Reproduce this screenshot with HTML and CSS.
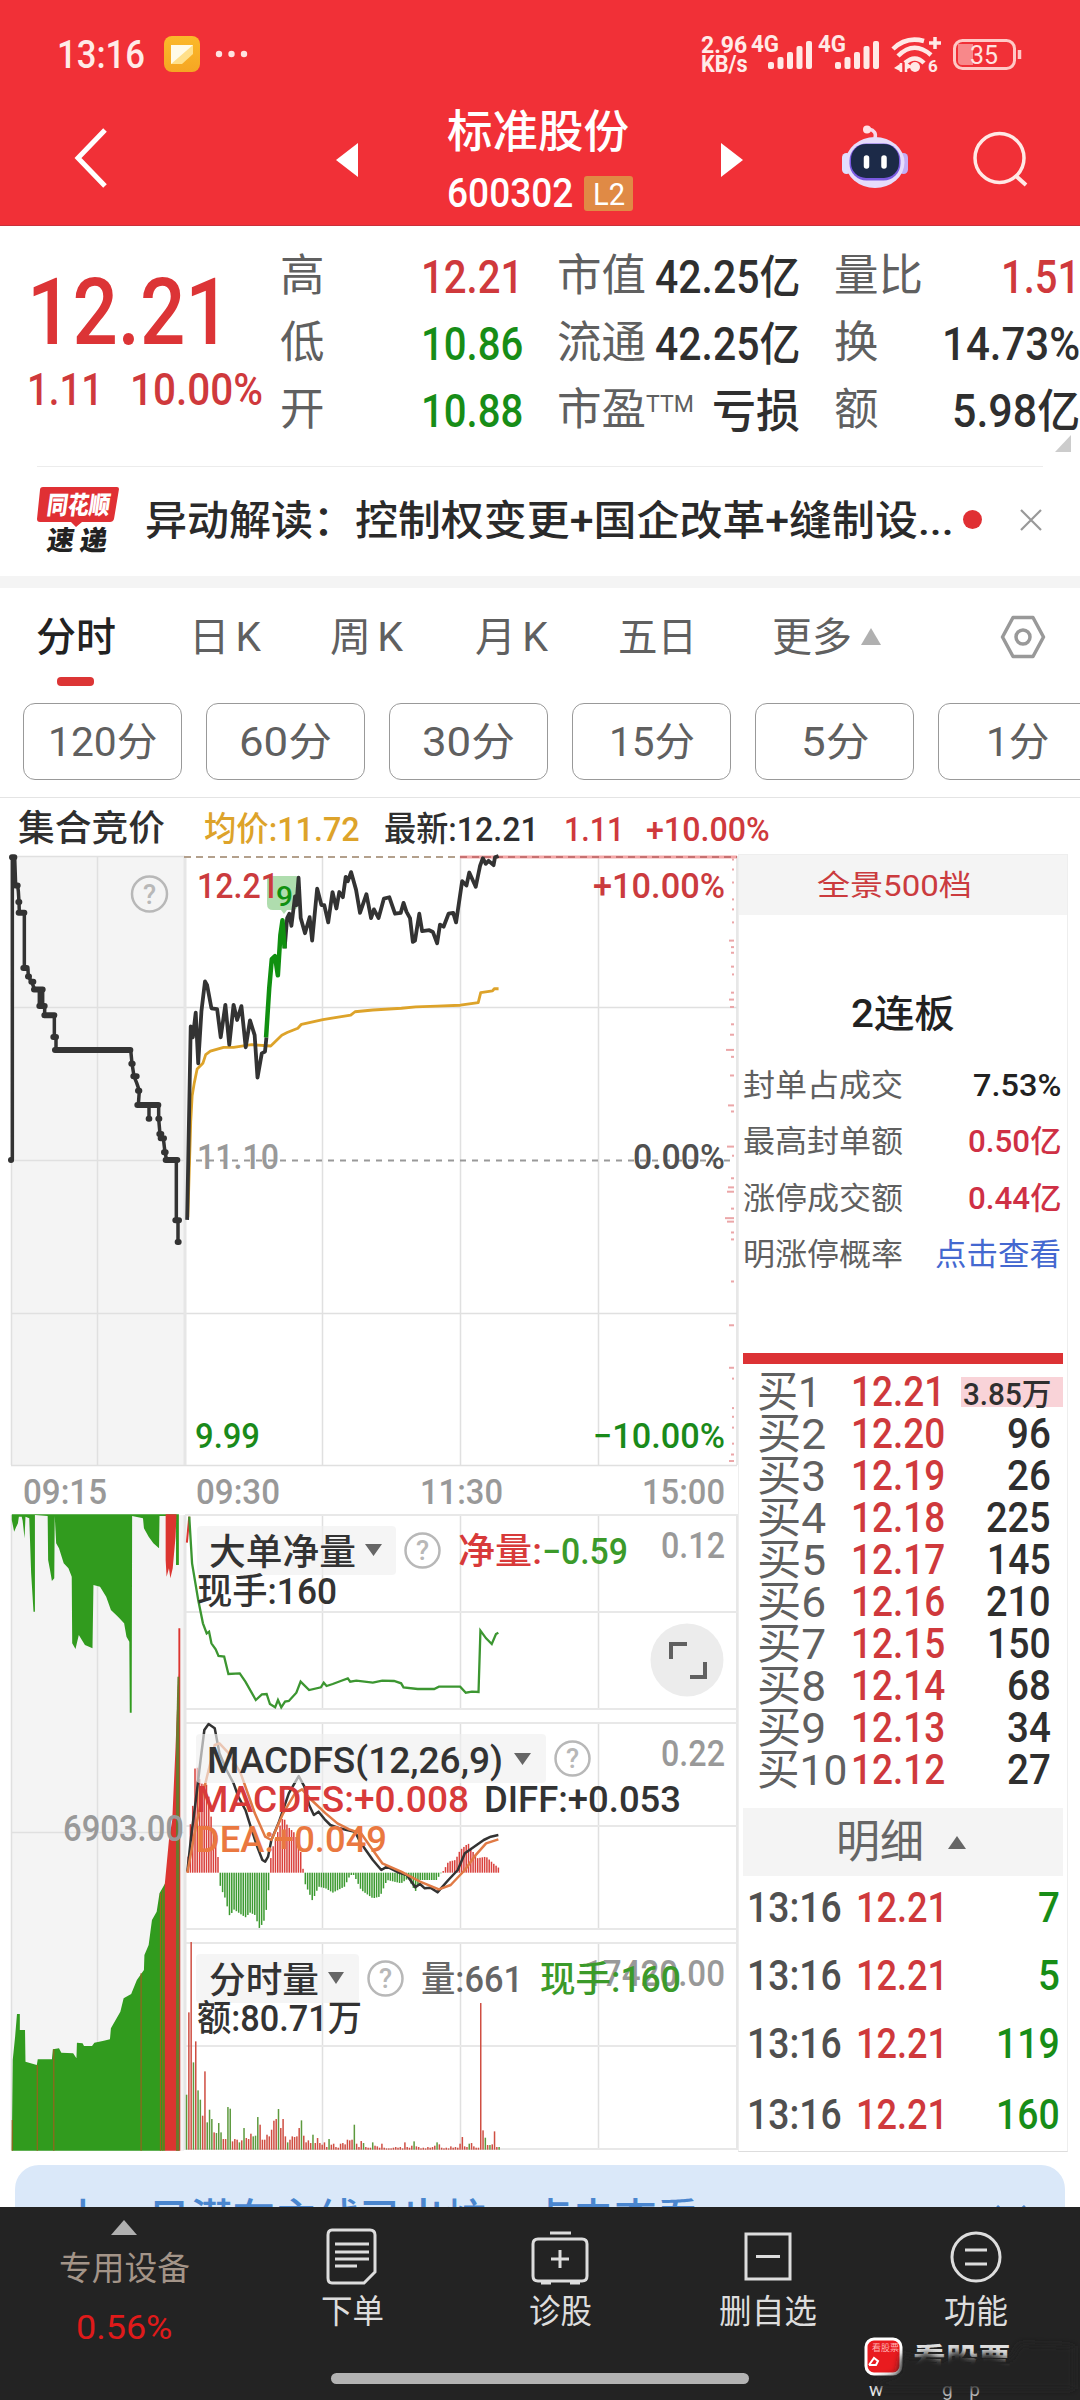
FILE: index.html
```html
<!DOCTYPE html>
<html lang="zh-CN">
<head>
<meta charset="utf-8">
<title>标准股份 600302</title>
<link rel="stylesheet" href="styles.css">
</head>
<body>
<div class="screen">
<header class="top">
  <div class="status">
    <span class="t s39" data-w="88">13:16</span>
    <svg class="note" viewBox="0 0 36 36"><defs><linearGradient id="ng" x1="0" y1="0" x2="0" y2="1"><stop offset="0" stop-color="#fbb92a"/><stop offset="1" stop-color="#f5a623"/></linearGradient></defs><rect width="36" height="36" rx="8" fill="url(#ng)"/><path d="M7 9h22v9L18 28H7z" fill="#ffe08a"/><path d="M7 9h22L7 28z" fill="#fffbe8"/></svg>
    <svg class="dots" viewBox="0 0 34 8"><g fill="#ffe3e0"><circle cx="4" cy="4" r="3.2"/><circle cx="16.500" cy="4" r="3.200"/><circle cx="29" cy="4" r="3.200"/></g></svg>
    <span class="grow"></span>
    <div class="speed"><span class="t" data-w="46">2.96</span><span class="t" data-w="47">KB/s</span></div>
    <svg class="sig" viewBox="0 0 330 44">
      <g fill="#ffe9e6">
        <text x="1" y="20" class="net" textLength="28" lengthAdjust="spacingAndGlyphs">4G</text>
        <text x="68" y="20" class="net" textLength="28" lengthAdjust="spacingAndGlyphs">4G</text>
        <g id="bars"><rect x="18" y="30" width="6" height="7" rx="2"/><rect x="27.500" y="25" width="6" height="12" rx="2"/><rect x="37" y="20" width="6" height="17" rx="2"/><rect x="46.500" y="14" width="6" height="23" rx="2"/><rect x="56" y="9" width="6" height="28" rx="2"/></g>
        <use href="#bars" x="67"/>
        <circle cx="165" cy="35" r="5"/>
        <text x="178" y="40" class="tiny">6</text>
        <path d="M151 40v-9M156 31v9" stroke="#ffe9e6" stroke-width="2.500"/><path d="M144 36l6-4v7zM157 31l6 4-6 2z"/>
        <path d="M185 5v12M179 11h12" stroke="#ffe9e6" stroke-width="3.500" fill="none"/>
      </g>
      <g fill="none" stroke="#ffe9e6" stroke-width="4.500">
        <path d="M143 17Q156 4 174 9M148 24Q164 8 181 23M155 31Q165 22 174 31"/>
        <rect x="204.500" y="8.500" width="60" height="28" rx="8" stroke-width="3" stroke="#ffc9c6"/>
        <path d="M269.500 18v9" stroke-width="3.500" stroke="#ffc9c6"/>
      </g>
      <path d="M208 12h15v21h-11q-4 0-4-4z" fill="#f8888a"/>
      <text x="220" y="32" class="bat" textLength="28" lengthAdjust="spacingAndGlyphs" fill="#ffe3e0">35</text>
    </svg>
  </div>
  <div class="titlebar">
    <svg class="back" viewBox="0 0 40 64"><path d="M36 4L9 32l27 28" fill="none" stroke="#fff" stroke-width="5"/></svg>
    <svg class="prev" viewBox="0 0 22 34"><path d="M22 0v34L0 17z" fill="#fff"/></svg>
    <div class="name">
      <span class="t s45" data-w="182">标准股份</span>
      <div class="code"><span class="t s40" data-w="126">600302</span><span class="l2"><span class="t" data-w="32">L2</span></span></div>
    </div>
    <svg class="next" viewBox="0 0 22 34"><path d="M0 0v34l22-17z" fill="#fff"/></svg>
    <svg class="robot" viewBox="0 0 66 64">
      <path d="M33 13Q35 6 27 4" fill="none" stroke="#f7d7ea" stroke-width="3.500"/><circle cx="25" cy="4.500" r="4" fill="#ffe0e6"/>
      <rect x="0" y="28" width="9" height="21" rx="4.500" fill="#dfe0ff"/><rect x="57" y="28" width="9" height="21" rx="4.500" fill="#c3aef5"/>
      <ellipse cx="33" cy="37.500" rx="29.500" ry="25.500" fill="#e6dcfb"/>
      <rect x="7.500" y="18.500" width="51" height="37" rx="17" fill="#7a5ae0"/><rect x="9" y="19" width="48" height="34" rx="15" fill="#1c2a48"/>
      <path d="M24.500 33v8M42 33v8" stroke="#fff" stroke-width="5.500" stroke-linecap="round"/>
    </svg>
    <svg class="search" viewBox="0 0 56 56"><circle cx="27.500" cy="27" r="24.500" fill="none" stroke="#ffe9e6" stroke-width="3.500"/><path d="M44 45l10 9" stroke="#ffe9e6" stroke-width="4"/></svg>
  </div>
</header>

<section class="quote">
  <div class="price">
    <span class="t big" data-w="204">12.21</span>
    <div class="chg"><span class="t s45" data-w="76">1.11</span><span class="t s45" data-w="133">10.00%</span></div>
  </div>
  <div class="facts">
    <span class="lab">高</span><span class="t v red" data-w="102">12.21</span>
    <span class="lab">市值</span><span class="t v" data-w="145">42.25亿</span>
    <span class="lab">量比</span><span class="t v red" data-w="79">1.51</span>
    <span class="lab">低</span><span class="t v green" data-w="102">10.86</span>
    <span class="lab">流通</span><span class="t v" data-w="145">42.25亿</span>
    <span class="lab">换</span><span class="t v" data-w="138">14.73%</span>
    <span class="lab">开</span><span class="t v green" data-w="102">10.88</span>
    <span class="lab">市盈<sup class="t" data-w="48">TTM</sup></span><span class="t v" data-w="88">亏损</span>
    <span class="lab">额</span><span class="t v" data-w="128">5.98亿</span>
  </div>
  <i class="corner"></i>
</section>

<section class="news">
  <svg class="logo" viewBox="0 0 82 68">
    <path d="M6 1h74q2 0 2 2l-5 30q-1 3-4 3H45l-6 5-5-5H3q-3 0-3-3L3 4q0-3 3-3z" fill="#e03034"/>
    <g transform="skewX(-8)" font-weight="900"><text x="13" y="28" font-size="25" fill="#fff" textLength="63" lengthAdjust="spacingAndGlyphs">同花顺</text>
    <text x="18" y="64" font-size="27" fill="#222" textLength="60">速递</text></g>
  </svg>
  <span class="headline"><span class="t" data-w="168">异动解读</span><span class="t" data-w="42">：</span><span class="t" data-w="599">控制权变更+国企改革+缝制设...</span></span>
  <i class="reddot"></i>
  <svg class="close" viewBox="0 0 24 24"><path d="M2 2l20 20M22 2L2 22" stroke="#999" stroke-width="2.200"/></svg>
</section>

<nav class="tabs">
  <span class="t on" data-w="80">分时</span>
  <span class="t k" data-w="78">日K</span>
  <span class="t k" data-w="79">周K</span>
  <span class="t k" data-w="79">月K</span>
  <span class="t" data-w="79">五日</span>
  <span class="more"><span class="t" data-w="80">更多</span><i class="up"></i></span>
  <svg class="gear" viewBox="0 0 46 46"><path d="M13 3.500h20L43.500 23 33 42.500H13L2.500 23z" fill="none" stroke="#999" stroke-width="3.500" stroke-linejoin="round"/><circle cx="23" cy="23" r="7" fill="none" stroke="#999" stroke-width="3.500"/></svg>
</nav>
<div class="periods">
  <span class="p"><span class="t" data-w="109">120分</span></span>
  <span class="p"><span class="t" data-w="93">60分</span></span>
  <span class="p"><span class="t" data-w="93">30分</span></span>
  <span class="p"><span class="t" data-w="86">15分</span></span>
  <span class="p"><span class="t" data-w="68">5分</span></span>
  <span class="p"><span class="t" data-w="63">1分</span></span>
</div>
<div class="legend">
  <span class="t auc" data-w="147">集合竞价</span>
  <span class="t gold" data-w="156">均价:11.72</span>
  <span class="t" data-w="155">最新:12.21</span>
  <span class="t red" data-w="60">1.11</span>
  <span class="t red" data-w="124">+10.00%</span>
</div>

<main class="board">
<svg class="chart" viewBox="0 852 738 1302">
  <rect x="11" y="856" width="173" height="609" fill="#f4f4f4"/>
  <rect x="11" y="1515" width="173" height="636" fill="#f4f4f4"/>
  <g stroke="#e0e0e0" stroke-width="1.500" fill="none">
    <path d="M11.500 856V1465M97.500 856V1465M322.500 856V1465M460.500 856V1465M598.500 856V1465M737 856V1465M11 856.500H185M11 1007.500H737M11 1160.500H184M11 1313.500H737M11 1465.500H737"/>
    <path d="M11.500 1515V2150M97.500 1515V2150M322.500 1515V1709M460.500 1515V1709M598.500 1515V1709M322.500 1723V1929M460.500 1723V1929M598.500 1723V1929M322.500 1943V2150M460.500 1943V2150M598.500 1943V2150M737 1515V2150M11 1832.500H184"/>
    <path stroke="#e8e8e8" stroke-width="2" d="M185 1515H738M185 1612H738M185 1709H738M185 1723H738M185 1826H738M185 1929H738M185 1943H738M185 2046H738M185 2149H738"/>
    <path stroke="#e6e6e6" stroke-width="3" d="M185 856V1465M185 1515V2150"/>
  </g>
  <path d="M184 857H460" stroke="#b3a08c" stroke-width="2" stroke-dasharray="7 5"/>
  <path d="M460 857H737" stroke="#f4a7a7" stroke-width="3"/><path d="M460 857H737" stroke="#b86060" stroke-width="1.500" stroke-dasharray="7 5"/>
  <path d="M196 1160.500H736" stroke="#999" stroke-width="2" stroke-dasharray="6 6"/>
  <g id="depth"></g>

  <g transform="translate(0 840) scale(.33333 .43367)" fill="none" stroke="#333">
    <path vector-effect="non-scaling-stroke" stroke-width="3.500" stroke-linejoin="round" d="M33 738H37V40H44L47 105H53L55 118 57 143 58 168H73V295H81L84 300 85 315 95 327 104 345H128V383H118V345M128 383H134V404H163V454H168V484H392L396 515 402 545 410 560 418 578 415 611H476V643L480 678 490 688 495 720 500 738H529V877H534V927M447 611V643"/>
    <path vector-effect="non-scaling-stroke" stroke-width="6" stroke-linecap="round" d="M33 738h.1M36 40h7M46 105h7M55 143h3M56 168h17M70 295h10M84 315h3M94 327h6M102 345h26M118 383h16M133 404h30M160 454h8M165 484h226M394 516h4M400 545h10M414 578h4M412 611h63M446 643h2M475 643h3M478 678h6M482 688h10M492 720h5M497 738h35M526 877h11M533 927h3"/>
  </g>
  <path d="M267 876h31v28q0 6-6 6h-5l-3 4-3-4h-8q-6 0-6-6z" fill="#9bd49a" opacity=".8"/>
  <g transform="translate(180 840) scale(.35714 .43367)" fill="none" stroke-linejoin="round">
    <path vector-effect="non-scaling-stroke" stroke="#dda32a" stroke-width="2.800" d="M22 870L30 650 34 590 40 560 48 528 64 515 72 495 85 487 122 478 150 478 200 472 254 475 285 450 300 444 330 434 340 425 400 414 430 410 478 404 490 396 540 392 620 388 660 385 720 383 785 381 835 375 842 352 875 348 880 343H892"/>
    <path vector-effect="non-scaling-stroke" stroke="#333" stroke-width="3.800" d="M20 876L30 430 36 455 44 398 51 515 60 395 70 326 76 335 88 388 104 390 114 455 127 380 138 472 150 380 160 415 172 383 184 478 196 416 209 450 217 548 229 492 238 488 242 455M293 250L300 180 306 170 312 198 322 130 326 150 332 87 338 180 350 215 363 178 370 232 384 112 396 150 404 150 415 190 427 120 438 158 446 120 456 132 464 85 470 95 479 74 493 115 504 168 522 125 535 180 543 160 556 180 571 135 586 132 602 170 618 168 626 145 634 165 644 180 652 235 658 232 670 170 678 210 698 208 708 212 720 238 728 195 738 200 752 170 765 168 773 190 790 95 802 105 810 75 828 108 840 60 848 42 856 55 864 48 878 58 882 40 892 37"/>
    <path vector-effect="non-scaling-stroke" stroke="#109010" stroke-width="4.500" d="M241 455L250 340 257 275 266 268 274 312 281 220 287 185 293 250"/>
  </g>

  <g class="ct">
    <text x="197" y="898" fill="#cb3b3e" textLength="82" lengthAdjust="spacingAndGlyphs">12.21</text>
    <text x="276" y="906" fill="#109010" font-size="28" textLength="17" lengthAdjust="spacingAndGlyphs">9</text>
    <text x="593" y="898" fill="#cb3b3e" textLength="132" lengthAdjust="spacingAndGlyphs">+10.00%</text>
    <text x="197" y="1169" fill="#999" textLength="82" lengthAdjust="spacingAndGlyphs">11.10</text>
    <text x="633" y="1169" fill="#505050" textLength="92" lengthAdjust="spacingAndGlyphs">0.00%</text>
    <text x="195" y="1448" fill="#1a8a1a" textLength="65" lengthAdjust="spacingAndGlyphs">9.99</text>
    <text x="593" y="1448" fill="#1a8a1a" textLength="132" lengthAdjust="spacingAndGlyphs">−10.00%</text>
    <g fill="#999">
    <text x="23" y="1504" textLength="84" lengthAdjust="spacingAndGlyphs">09:15</text>
    <text x="196" y="1504" textLength="84" lengthAdjust="spacingAndGlyphs">09:30</text>
    <text x="420" y="1504" textLength="83" lengthAdjust="spacingAndGlyphs">11:30</text>
    <text x="642" y="1504" textLength="83" lengthAdjust="spacingAndGlyphs">15:00</text>
    </g>
  </g>

  <g transform="translate(0 1500) scale(.47193 .33333)">
    <path fill="#319b1e" d="M25 43V60L30 95 34 82 38 70 40 50 46 50 48 62 52 115 54 50 62 55 66 220 71 335H74V45L101 48 102 180 106 210 110 243 115 235 116 48 119 130 125 145 135 190 145 205 152 230 153 430 160 447 167 405 180 435 196 445 198 255 212 260 225 290 235 330 250 350 263 370 268 410 274 425 275 638H279L280 48 303 55 305 85 315 110 325 130 337 145 338 48H373V195H379V43z"/>
    <path fill="#dc3530" d="M351 43V180L353 230 358 205 361 235 366 205 372 110 374 43z"/>
    <path vector-effect="non-scaling-stroke" fill="none" stroke="#dc3530" stroke-width="2" d="M396 128L401 50"/>
    <path vector-effect="non-scaling-stroke" fill="none" stroke="#3c9631" stroke-width="2.300" d="M401 50L407 190 420 300 430 370 438 400 443 395 448 430 457 448 463 468 475 470 484 522 508 520 520 545 542 600 555 583 565 582 572 612 583 622 589 600 596 622 604 605 612 603 628 578 637 545 655 570 680 562 686 548 692 558 705 552 722 543 737 535 742 545 755 542 790 548 810 542 835 543 850 550 855 562 885 567 920 567 930 560 975 560 987 578 1000 575 1014 576 1018 392 1030 415 1042 432 1051 402 1056 398"/>
  </g>
  <g transform="translate(0 1840) scale(.47193 .33333)">
    <path fill="#319b1e" d="M25 932L27 660 32 590 36 522H42V570H53L54 665 78 675 80 658H110L112 628 125 625 130 638 155 640 162 655 163 608 175 610 178 618H195L200 608 220 602 233 598 235 565 245 540 255 515 262 475 278 462 290 420 305 390 306 345 315 315 322 240 332 215 338 160 350 130V932z"/>
    <path fill="#dc3530" d="M349 932V135L358 0 365 -60 372 -280 378 -500V-635H382V932z"/>
    <path fill="#6b7a2c" d="M373 932V-300L376 -490H380V932z"/>
    <path stroke="#96641e" stroke-width="2.500" d="M26 932V840M79 932V675M114 932V628M299 932V400M340 932V160M345 932V150"/>
  </g>
  <g id="macd"></g>
  <g transform="translate(0 1500) scale(.47193 .33333)" fill="none" stroke-linejoin="round">
    <path vector-effect="non-scaling-stroke" stroke="#333" stroke-width="2.500" d="M397 1115L405 1010 415 900 425 780 433 690 442 672 455 685 465 760 480 810 495 850 505 890 520 930 530 975 545 1040 556 1080 562 1085 568 1070 575 1020 590 970 612 880 633 828 645 860 655 915 665 945 675 935 688 958 700 975 720 985 735 990 752 995 765 1030 775 1050 790 1080 808 1110 820 1100 845 1118 862 1125 880 1162 890 1152 900 1165 912 1163 927 1177 950 1140 970 1110 985 1060 1010 1035 1025 1020 1040 1010 1056 1005"/>
    <path vector-effect="non-scaling-stroke" stroke="#e07a45" stroke-width="2.500" d="M397 1118L415 980 430 880 455 735 465 730 485 760 510 820 540 940 562 1010 575 1020 600 940 625 880 640 868 660 900 690 940 715 970 740 988 765 1000 785 1040 810 1090 850 1115 890 1145 930 1168 955 1155 985 1110 1005 1070 1030 1030 1056 1018"/>
  </g>
  <g id="vol"></g>

  <g fill="#f0f0f0" fill-opacity=".65"><rect x="197" y="1526" width="199" height="49" rx="4"/><rect x="196" y="1734" width="350" height="49" rx="4"/><rect x="196" y="1954" width="163" height="49" rx="4"/></g>
  <g fill="#666"><path d="M365 1544h17l-8.500 12zM514 1753h17l-8.500 12zM328 1972h16l-8 12z"/></g>
  <g fill="none" stroke="#b8b8b8" stroke-width="2.500"><circle cx="149.500" cy="894" r="17.500"/><circle cx="422.500" cy="1550.500" r="17"/><circle cx="572.500" cy="1758.500" r="17"/><circle cx="385.500" cy="1978.500" r="17"/></g>
  <g class="q" text-anchor="middle"><text x="149.500" y="904">?</text><text x="422.500" y="1560">?</text><text x="572.500" y="1768">?</text><text x="385.500" y="1988">?</text></g>
  <circle cx="687" cy="1660" r="36.500" fill="#ececec"/>
  <path d="M671 1659v-15h16M690 1677h15v-15" fill="none" stroke="#606060" stroke-width="4"/>

  <g class="it" fill="#333">
    <text x="209" y="1565" textLength="147" lengthAdjust="spacingAndGlyphs">大单净量</text>
    <text x="458" y="1564" fill="#d83a3a" textLength="84" lengthAdjust="spacingAndGlyphs">净量:</text>
    <text x="542" y="1564" fill="#3b9a2a" textLength="86" lengthAdjust="spacingAndGlyphs">−0.59</text>
    <text x="661" y="1558" fill="#999" textLength="64" lengthAdjust="spacingAndGlyphs">0.12</text>
    <text x="197" y="1604" textLength="140" lengthAdjust="spacingAndGlyphs">现手:160</text>
    <text x="207" y="1773" textLength="296" lengthAdjust="spacingAndGlyphs">MACDFS(12,26,9)</text>
    <text x="661" y="1766" fill="#999" textLength="64" lengthAdjust="spacingAndGlyphs">0.22</text>
    <text x="196" y="1812" fill="#d83a3a" textLength="273" lengthAdjust="spacingAndGlyphs">MACDFS:+0.008</text>
    <text x="484" y="1812" textLength="197" lengthAdjust="spacingAndGlyphs">DIFF:+0.053</text>
    <text x="196" y="1852" fill="#ea7840" textLength="191" lengthAdjust="spacingAndGlyphs">DEA:+0.049</text>
    <text x="63" y="1841" fill="#999" textLength="121" lengthAdjust="spacingAndGlyphs">6903.00</text>
    <text x="209" y="1993" textLength="110" lengthAdjust="spacingAndGlyphs">分时量</text>
    <text x="421" y="1992" fill="#666" textLength="102" lengthAdjust="spacingAndGlyphs">量:661</text>
    <text x="584" y="1986" fill="#999" textLength="141" lengthAdjust="spacingAndGlyphs">17420.00</text>
    <text x="540" y="1992" fill="#3b9a2a" textLength="141" lengthAdjust="spacingAndGlyphs">现手:160</text>
    <text x="197" y="2031" textLength="165" lengthAdjust="spacingAndGlyphs">额:80.71万</text>
  </g>
</svg>

<aside class="side">
  <div class="full"><span class="t" data-w="155">全景500档</span></div>
  <div class="boards"><span class="t" data-w="104">2连板</span></div>
  <dl class="seal">
    <div><dt class="t" data-w="160">封单占成交</dt><dd class="t" data-w="88">7.53%</dd></div>
    <div><dt class="t" data-w="160">最高封单额</dt><dd class="t sred" data-w="93">0.50亿</dd></div>
    <div><dt class="t" data-w="160">涨停成交额</dt><dd class="t sred" data-w="93">0.44亿</dd></div>
    <div><dt class="t" data-w="160">明涨停概率</dt><dd class="t blue" data-w="126">点击查看</dd></div>
  </dl>
  <div class="rule"></div>
  <div class="bids">
    <div class="bid first"><span class="lv t" data-w="64">买1</span><span class="pr t" data-w="94">12.21</span><span class="am"><span class="t" data-w="88">3.85万</span></span></div>
    <div class="bid"><span class="lv t" data-w="69">买2</span><span class="pr t" data-w="94">12.20</span><span class="am"><span class="t" data-w="44">96</span></span></div>
    <div class="bid"><span class="lv t" data-w="69">买3</span><span class="pr t" data-w="94">12.19</span><span class="am"><span class="t" data-w="44">26</span></span></div>
    <div class="bid"><span class="lv t" data-w="69">买4</span><span class="pr t" data-w="94">12.18</span><span class="am"><span class="t" data-w="65">225</span></span></div>
    <div class="bid"><span class="lv t" data-w="69">买5</span><span class="pr t" data-w="94">12.17</span><span class="am"><span class="t" data-w="64">145</span></span></div>
    <div class="bid"><span class="lv t" data-w="69">买6</span><span class="pr t" data-w="94">12.16</span><span class="am"><span class="t" data-w="65">210</span></span></div>
    <div class="bid"><span class="lv t" data-w="69">买7</span><span class="pr t" data-w="94">12.15</span><span class="am"><span class="t" data-w="64">150</span></span></div>
    <div class="bid"><span class="lv t" data-w="69">买8</span><span class="pr t" data-w="94">12.14</span><span class="am"><span class="t" data-w="44">68</span></span></div>
    <div class="bid"><span class="lv t" data-w="69">买9</span><span class="pr t" data-w="94">12.13</span><span class="am"><span class="t" data-w="44">34</span></span></div>
    <div class="bid"><span class="lv t" data-w="90">买10</span><span class="pr t" data-w="94">12.12</span><span class="am"><span class="t" data-w="44">27</span></span></div>
  </div>
  <div class="ticksHead"><span class="t" data-w="88">明细</span><i class="up dark"></i></div>
  <div class="ticks">
    <div class="tick"><span class="t" data-w="95">13:16</span><span class="t red" data-w="92">12.21</span><span class="am"><span class="t" data-w="22">7</span></span></div>
    <div class="tick"><span class="t" data-w="95">13:16</span><span class="t red" data-w="92">12.21</span><span class="am"><span class="t" data-w="22">5</span></span></div>
    <div class="tick"><span class="t" data-w="95">13:16</span><span class="t red" data-w="92">12.21</span><span class="am"><span class="t" data-w="64">119</span></span></div>
    <div class="tick last"><span class="t" data-w="95">13:16</span><span class="t red" data-w="92">12.21</span><span class="am"><span class="t" data-w="64">160</span></span></div>
  </div>
</aside>
</main>

<div class="promo"><span class="t" data-w="636">上一日潜在主线已出炉，点击查看</span><svg viewBox="0 0 30 30"><path d="M1 2l28 26M29 2L1 28" stroke="#4a86cf" stroke-width="3"/></svg></div>

<footer class="dock">
  <div class="cell sector"><i class="up light"></i><span class="t brown" data-w="131">专用设备</span><span class="t hot" data-w="97">0.56%</span></div>
  <div class="cell"><svg viewBox="0 0 60 60"><path d="M10 4h38q5 0 5 5v37L42 57H10q-4 0-4-5V9q0-5 4-5zM13 18h34M13 26h34M13 33h34M13 40h22"/></svg><span class="t" data-w="63">下单</span></div>
  <div class="cell"><svg viewBox="0 0 60 60"><path d="M20 7h21M8 13h44q5 0 5 5v32q0 5-5 5H8q-5 0-5-5V18q0-5 5-5zM30 24v18M21 33h18M11 57h10M40 57h10"/></svg><span class="t" data-w="63">诊股</span></div>
  <div class="cell"><svg viewBox="0 0 60 60"><path d="M8 8h44v45H8zM18 30.500h24"/></svg><span class="t" data-w="98">删自选</span></div>
  <div class="cell"><svg viewBox="0 0 60 60"><circle cx="30" cy="31" r="24"/><path d="M19 24h22M19 38h22"/></svg><span class="t" data-w="64">功能</span></div>
  <i class="home"></i>
  <div class="mark">
    <svg viewBox="0 0 220 68">
      <defs><filter id="soft" x="-20%" y="-50%" width="140%" height="200%"><feGaussianBlur stdDeviation="3.500"/></filter></defs>
      <rect x="6" y="7" width="35" height="35" rx="8" fill="#e91b1f" stroke="#fff" stroke-width="3"/>
      <text x="12" y="19" font-size="9" fill="#ffb3b3">看股票</text>
      <path d="M9 33l5-7 4 3-2 4h-7" fill="none" stroke="#fff" stroke-width="2"/>
      <text x="53" y="40" font-size="33" font-weight="700" fill="#e0e0e0" textLength="98" lengthAdjust="spacingAndGlyphs">看股票</text>
      <text x="9" y="64" font-size="19" fill="#e8e8e8">w</text>
      <text x="82" y="64" font-size="19" fill="#bbb" textLength="38">g  p</text>
      <path d="M14 50L38 42 42 22 56 26 66 20 82 28 96 18 112 26 128 20 150 28 160 12 214 14V57H22z" fill="#202020" filter="url(#soft)"/>
    </svg>
  </div>
</footer>
</div>
<script src="main.js"></script>
</body>
</html>
```
FILE: styles.css
```css
*{box-sizing:border-box}
body{margin:0;background:#fff;color:#2f2f2f;font-family:Roboto,"Noto Sans CJK SC",sans-serif;font-weight:500}
.screen{width:1080px;height:2400px;overflow:hidden;display:flex;flex-direction:column;background:#fff}
svg{display:block;flex:none;overflow:visible}
i{display:block;flex:none}
.t{display:inline-block;white-space:nowrap;flex:none;text-align:left}
.t>.in{display:inline-block;transform-origin:0 50%}
.s39{font-size:39px}.s40{font-size:40px}.s45{font-size:45px}
.red{color:#cf393c}.green{color:#178d17}
.grow{flex:1}

.top{height:226px;background:#f13037;color:#fff;flex:none;border-bottom:1px solid #c9303a}
.status{display:flex;align-items:center;height:44px;margin-top:32px;padding-left:57px;line-height:44px;color:#ffebe8;font-weight:500}
.note{width:36px;height:36px;margin-left:19px}
.dots{width:34px;height:8px;margin-left:15px}
.speed{display:flex;flex-direction:column;width:48px;font-size:23px;line-height:19px;font-weight:700;margin-right:1px}
.sig{width:330px;height:44px}
.net{font-size:23px;font-weight:700}.bat{font-size:26px;font-weight:400}.tiny{font-size:17px;font-weight:700}
.titlebar{display:flex;align-items:flex-start;height:150px;padding:28px 0 0 69px}
.back{width:40px;height:64px;margin-top:22px}
.prev{width:22px;height:34px;margin:39px 0 0 227px}
.name{width:186px;margin-left:89px}
.name .s45{display:block;line-height:55px}
.code{display:flex;align-items:center;height:38px;line-height:38px;margin-top:15px}
.l2{display:flex;width:49px;height:35px;line-height:35px;margin-left:11px;background:#e08a45;border-radius:3px;font-size:31px;font-weight:400;justify-content:center}
.next{width:22px;height:34px;margin:39px 0 0 88px}
.robot{width:66px;height:64px;margin:21px 0 0 99px}
.search{width:56px;height:56px;margin:27px 0 0 64px}

.quote{position:relative;display:flex;flex:none;height:241px;padding-top:17px}
.quote::after{content:"";position:absolute;left:37px;right:37px;bottom:0;height:1px;background:#ececec}
.price{width:281px;padding:23px 0 0 27px;color:#cf393c}
.big{display:block;font-size:92px;line-height:92px;color:#dc3436}
.chg{display:flex;gap:27px;line-height:50px;margin-top:6px}
.facts{display:grid;grid-template-columns:100px 143px 134px 143px 137px 143px;grid-template-rows:repeat(3,67px);line-height:67px;font-size:46px;width:800px}
.facts .v{justify-self:end}
.facts .lab{font-size:44.500px;font-weight:400;color:#606060;white-space:nowrap}
.facts .lab:nth-child(6n+3){margin-left:34px}
.facts .lab:nth-child(6n+5){margin-left:34px}
.lab sup{font-size:24px;line-height:24px;vertical-align:14px}
.corner{position:absolute;right:9px;top:209px;border-left:16px solid transparent;border-bottom:17px solid #ccc}

.news{display:flex;align-items:center;flex:none;height:121px;padding:0 0 4px 37px;border-bottom:12px solid #f4f4f4}
.logo{width:82px;height:68px}
.headline{display:flex;font-size:41px;line-height:60px;margin-left:26px;color:#2a2a2a}
.reddot{width:19px;height:19px;border-radius:50%;background:#e03034;margin-left:9px}
.close{width:24px;height:24px;margin-left:37px}

.tabs{display:grid;grid-template-columns:153px 141px 145px 143px 154px 228px auto;align-items:center;flex:none;height:115px;padding:0 0 18px 36px;font-size:40px;line-height:60px;font-weight:400;color:#606060}
.on{position:relative;color:#222;font-weight:500}
.on::after{content:"";position:absolute;left:21px;top:70px;width:37px;height:9px;border-radius:4px;background:#dc3535}
.k{letter-spacing:6px}
.more{display:flex;align-items:center;gap:9px}
.up{border:10px solid transparent;border-top:0;border-bottom:17px solid #b0b0b0}
.gear{width:46px;height:46px}
.periods{display:flex;gap:24px;flex:none;height:95px;padding-left:23px;border-bottom:1px solid #e4e4e4;overflow:hidden}
.p{flex:none;display:flex;justify-content:center;width:159px;height:77px;line-height:75px;border:1.500px solid #999;border-radius:12px;font-size:40px;font-weight:400;color:#606060}
.legend{display:flex;flex:none;height:54px;line-height:61px;padding-left:18px;font-size:34px}
.legend .t{margin-right:25px}
.legend .auc{font-size:36px;margin-right:39px}
.legend .gold{color:#dda32a;margin-right:24px}
.legend .red{margin-right:22px}

.board{display:flex;flex:none;height:1302px}
.chart{width:738px;height:1302px}
.ct{font-size:35px}
.it{font-size:36px}
.q{font-size:27px;fill:#b8b8b8}
.side{width:330px;border:1px solid #eee;border-bottom-color:#ddd;padding:0 4px;height:1298px;margin-top:2px}
.full{height:60px;line-height:60px;margin:0 -4px;background:#f4f4f4;text-align:center;font-size:29px;font-weight:400;color:#cb3b3e;padding-right:17px}
.boards{text-align:center;height:142px;font-size:38px;line-height:196px;color:#222;padding-right:1px}
.seal{margin:0;font-size:31px;line-height:56.300px;font-weight:400;color:#606060}
.seal div{display:flex;justify-content:space-between;padding-right:2px}
.seal dd{margin:0;color:#222;font-weight:500}
.seal .sred{color:#cf3045}.seal .blue{color:#4468d0;font-weight:400}
.rule{height:11px;background:#dc3235;margin-top:71px}
.bids{font-size:42px;line-height:42px;padding-top:6px}
.bid{display:grid;grid-template-columns:94px 110px 1fr;height:42px;padding-left:14px}
.lv{font-weight:400;color:#606060;font-size:43px}
.pr{color:#cf393c}
.am{text-align:right;padding-right:12px}
.first .am{position:relative;font-size:31px;line-height:47px;z-index:0}
.first .am::before{content:"";position:absolute;z-index:-1;left:0;right:0;top:7px;height:30px;background:#f9d3d8}
.ticksHead{display:flex;align-items:center;height:68px;margin-top:18px;padding-left:93px;background:#f4f4f4;color:#666;font-size:45px;line-height:68px;font-weight:400}
.dark{border-width:0 9px 13px;border-bottom-color:#666;margin-left:24px}
.ticks{font-size:42px;color:#505050}
.tick{display:grid;grid-template-columns:109px 100px 1fr;height:68px;line-height:62px;padding-left:4px}
.tick .am{color:#178d17;padding-right:3px}
.last{line-height:68px}

.promo{flex:none;display:flex;justify-content:space-between;height:42px;margin:11px 15px 0;padding:22px 39px 0 48px;border-radius:24px 24px 0 0;background:#dae8f9;color:#4a86cf;font-size:42px;line-height:64px;overflow:hidden}
.promo svg{width:30px;height:30px;margin-top:17px}
.dock{position:relative;flex:none;display:grid;grid-template-columns:248px 208px 208px 208px 208px;height:193px;background:#232323;color:#ddd;font-size:33px;font-weight:400}
.cell{display:flex;flex-direction:column;align-items:center;padding-top:19px}
.cell svg{width:60px;height:60px;fill:none;stroke:#ddd;stroke-width:3}
.cell .t{line-height:50px}
.sector{padding-top:13px}
.light{border-width:0 13px 15px;border-bottom-color:#b0b0b0}
.cell .brown{color:#a39488;margin-top:8px}
.cell .hot{color:#e01a1a;margin-top:9px}
.home{position:absolute;left:331px;top:166px;width:418px;height:11px;border-radius:6px;background:#b3b3b3}
.mark{position:absolute;right:0;bottom:0;width:220px;height:68px;overflow:hidden}
```
FILE: main.js
```js
// Condense each label to its design width.
document.querySelectorAll('.t[data-w]').forEach(function (el) {
  var inner = document.createElement('span');
  inner.className = 'in';
  while (el.firstChild) inner.appendChild(el.firstChild);
  el.appendChild(inner);
  var w = +el.dataset.w, nat = inner.offsetWidth;
  el.style.width = w + 'px';
  inner.style.transform = 'translateY(1px) scaleX(' + (w / nat) + ')';
});

var NS = 'http://www.w3.org/2000/svg';
function bar(host, x, y, w, h, fill) {
  var r = document.createElementNS(NS, 'rect');
  r.setAttribute('x', x); r.setAttribute('y', y);
  r.setAttribute('width', w); r.setAttribute('height', h);
  r.setAttribute('fill', fill);
  host.appendChild(r);
}
var RED = '#d9403c', GREEN = '#3c9a30';

// MACD histogram: envelope points [x, top], one bar per minute.
var macd = document.getElementById('macd');
var env = [[398,60],[404,-60],[411,-130],[414,-250],[420,-200],[425,-170],[440,-165],[445,-90],[455,0],[463,60],[465,98],
 [467,145],[475,165],[487,230],[495,208],[520,232],[530,218],[540,225],[550,266],[562,235],[569,150],[572,98],
 [574,50],[580,10],[600,-70],[610,-40],[625,-20],[638,40],[643,98],[646,130],[662,182],[675,140],[690,145],[705,158],[730,140],[742,105],[750,105],[765,150],[790,175],[805,170],[820,120],[850,130],[865,115],[880,155],[890,120],[925,120],[935,98],
 [940,92],[950,65],[965,60],[975,30],[992,10],[1010,55],[1030,50],[1045,70],[1058,85]];
for (var x = 398.5, i = 0; x < 1059; x += 4.87) {
  while (i < env.length - 2 && env[i + 1][0] < x) i++;
  var a = env[i], b = env[i + 1];
  var y = a[1] + (b[1] - a[1]) * (x - a[0]) / (b[0] - a[0]);
  var X = x * .47193, Y = 1840 + y / 3, base = 1872.7;
  if (y < 98) bar(macd, X - .7, Y, 1.5, base - Y, RED); else bar(macd, X - .7, base, 1.5, Y - base, GREEN);
}

// Minute volume: top of each bar, sign marks direction (negative = down).
var vol = document.getElementById('vol');
var v = [-165,412,623,-262,325,-178,-150,102,235,-82,-120,-92,52,-50,-80,-52,32,32,-128,-123,25,32,30,-22,28,-65,35,32,48,-40,-42,-98,75,30,30,45,40,60,87,92,-122,65,92,40,-22,30,40,38,40,65,-88,42,22,28,20,-45,20,35,20,15,22,8,-32,15,18,8,6,18,20,16,30,28,30,-75,18,8,26,-20,8,6,6,-22,12,10,6,18,6,4,4,4,6,8,6,8,4,22,8,6,12,-25,10,8,4,6,4,8,6,8,12,-22,16,6,4,6,4,10,6,8,6,18,38,10,8,-18,20,10,6,6,440,58,-36,14,-14,16,55,8,-8];
v.forEach(function (n, k) {
  var h = Math.abs(n) / 3;
  bar(vol, (395 + k * 4.87) * .47193 - .6, 2149.7 - h, 1.5, h, n < 0 ? '#5d9a3e' : '#cf4e42');
});

// Price distribution ticks along the right edge of the chart.
var depth = document.getElementById('depth');
[[45,2],[68,2],[98,2],[137,2],[160,2],[190,2],[232,5],[247,3],[260,3],[292,3],[310,2],[352,3],[368,5],[385,4],[425,3],[449,4],[484,8],[500,3],[543,4],[612,6],[626,3],[707,7],[728,2],[780,3],[801,6],[811,7],[850,3],[872,9],[880,7],[905,3],[921,3],[1018,3],[1119,5],[1217,5],[1242,2],[1310,2],[1330,2],[1355,2],[1392,2],[1417,3],[1432,5]].forEach(function (d) {
  bar(depth, 734 - d[1], 840 + d[0] * .43367 - 1, d[1], 2, '#eba6a8');
});
```
